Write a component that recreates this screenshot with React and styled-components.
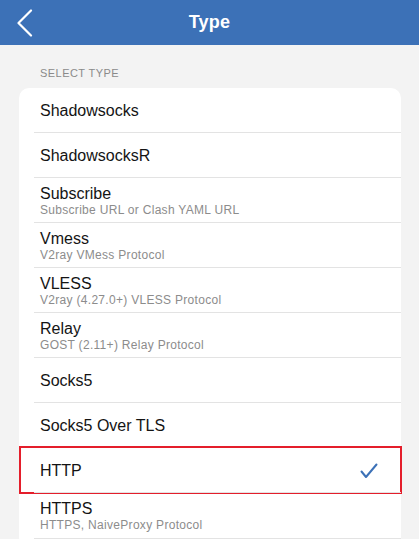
import styled, { createGlobalStyle } from 'styled-components'

const GlobalStyle = createGlobalStyle`
	html, body {
		margin: 0;
		padding: 0;
		background: #f3f3f3;
		font-family: 'Liberation Sans', Arial, sans-serif;
		overflow: hidden;
	}
`

const NavBar = styled.header`
	height: 45px;
	background: #3c71b7;
	display: grid;
	grid-template-columns: 60px 1fr 60px;
	align-items: center;
	color: #fff;
`

const BackButton = styled.button`
	border: none;
	background: none;
	padding: 0 0 0 16px;
	height: 45px;
	display: flex;
	align-items: center;
	cursor: pointer;
`

const Title = styled.h1`
	margin: 0;
	text-align: center;
	font-size: 18px;
	font-weight: 700;
	letter-spacing: 0.2px;
`

const Content = styled.main`
	padding: 22px 18px 0 19px;
`

const SectionLabel = styled.div`
	padding-left: 21px;
	font-size: 11px;
	letter-spacing: 0.45px;
	color: #8a8a8a;
	line-height: 13px;
	margin-bottom: 8px;
`

const Card = styled.ul`
	list-style: none;
	margin: 0;
	padding: 0 0 10px;
	background: #fff;
	border-radius: 10px;
`

const Row = styled.li`
	position: relative;
	height: 45px;
	display: flex;
	align-items: center;
	padding: 0 23px 0 21px;
	box-sizing: border-box;

	& + &::before,
	&:last-child::after {
		content: '';
		position: absolute;
		top: -1px;
		left: 15px;
		right: 0;
		height: 1px;
		background: #e3e3e3;
	}

	&:last-child::after {
		top: auto;
		bottom: -1px;
	}
`

const Texts = styled.div`
	flex: 1;
	display: flex;
	flex-direction: column;
`

const Name = styled.span`
	font-size: 16px;
	line-height: 19px;
	color: #141414;
`

const Hint = styled.span`
	font-size: 12px;
	line-height: 15px;
	color: #8c8c8c;
	letter-spacing: 0.3px;
`

const Highlight = styled.div`
	position: absolute;
	top: -2px;
	left: 0;
	right: -1px;
	bottom: -1px;
	border: 2px solid #e41e2b;
	pointer-events: none;
`

const types = [
	{ name: 'Shadowsocks' },
	{ name: 'ShadowsocksR' },
	{ name: 'Subscribe', hint: 'Subscribe URL or Clash YAML URL' },
	{ name: 'Vmess', hint: 'V2ray VMess Protocol' },
	{ name: 'VLESS', hint: 'V2ray (4.27.0+) VLESS Protocol' },
	{ name: 'Relay', hint: 'GOST (2.11+) Relay Protocol' },
	{ name: 'Socks5' },
	{ name: 'Socks5 Over TLS' },
	{ name: 'HTTP' },
	{ name: 'HTTPS', hint: 'HTTPS, NaiveProxy Protocol' },
]

const selected = 'HTTP'

function Check() {
	return (
		<svg width="18" height="16" viewBox="0 0 18 16" fill="none">
			<path
				d="M1.5 8.5 L6 14 L16.5 1.5"
				stroke="#3c71b7"
				strokeWidth="2"
				strokeLinecap="round"
				strokeLinejoin="round"
			/>
		</svg>
	)
}

export default function App() {
	return (
		<>
			<GlobalStyle />
			<NavBar>
				<BackButton aria-label="Back">
					<svg width="18" height="28" viewBox="0 0 18 28" fill="none">
						<path
							d="M15 1.5 L2.5 14 L15 26.5"
							stroke="#fff"
							strokeWidth="2.2"
							strokeLinecap="round"
							strokeLinejoin="round"
						/>
					</svg>
				</BackButton>
				<Title>Type</Title>
				<span />
			</NavBar>
			<Content>
				<SectionLabel>SELECT TYPE</SectionLabel>
				<Card>
					{types.map((t) => (
						<Row key={t.name}>
							<Texts>
								<Name>{t.name}</Name>
								{t.hint && <Hint>{t.hint}</Hint>}
							</Texts>
							{t.name === selected && <Check />}
							{t.name === selected && <Highlight />}
						</Row>
					))}
				</Card>
			</Content>
		</>
	)
}
